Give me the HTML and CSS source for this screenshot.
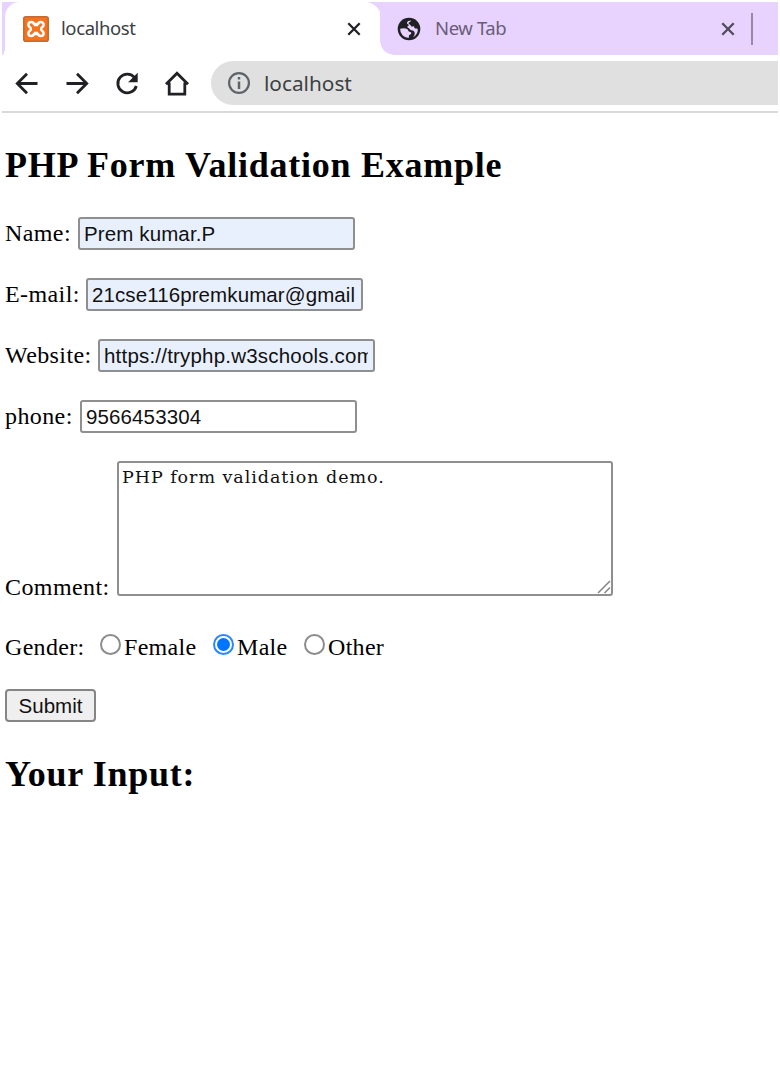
FILE: index.html
```html
<!DOCTYPE html>
<html lang="en">
<head>
<meta charset="utf-8">
<title>localhost</title>
<link rel="stylesheet" href="styles.css">
</head>
<body>
<div class="browser">
  <div class="tabs">
    <div class="edge"></div>
    <div class="tab active">
      <svg class="favicon" viewBox="0 0 26 26" width="26" height="26">
        <rect x=".8" y=".8" width="24.4" height="24.4" rx="2" fill="#f3731f" stroke="#c46a35" stroke-width="1.600"/>
        <path d="M8.300 6C6.500 6 5.400 7.300 5.400 8.800c0 1.600 1 2.200 1.800 2.700.9.700.9 2.300 0 3-.8.500-1.800 1.100-1.800 2.700 0 1.500 1.100 2.800 2.900 2.800 1.600 0 2.400-.9 2.700-2.100h4c.3 1.200 1.100 2.100 2.700 2.100 1.800 0 2.900-1.300 2.900-2.800 0-1.600-1-2.200-1.800-2.700-.9-.7-.9-2.300 0-3 .8-.5 1.800-1.100 1.800-2.700C20.600 7.300 19.500 6 17.700 6c-1.600 0-2.400.9-2.700 2.100h-4C10.700 6.900 9.900 6 8.300 6z" fill="none" stroke="#fff" stroke-width="2.500"/>
        <path d="M13 7.500v2.800M13 15.700v2.800" stroke="#fff" stroke-width="4"/>
      </svg>
      <span class="tab-title">localhost</span>
      <svg class="close" viewBox="0 0 14 14" width="14" height="14"><path d="M1.300 1.300l11.400 11.400M12.700 1.300L1.300 12.700"/></svg>
    </div>
    <div class="tab idle">
      <svg class="globe" viewBox="0 0 24 24" width="24" height="24">
        <circle cx="12" cy="12" r="11.300" fill="#202124"/>
        <path d="M3.100 11.800c2.200-.8 5.200-.9 7 .2 1.300.8.900 2.500 2.300 2.700 1.600.2 2.300.8 1.700 2.100-.5 1.100-1.900.8-2.100 1.800l-.3 2.300A8.800 8.800 0 0 1 3.100 11.800z" fill="#e8d3fe"/>
        <path d="M14.200 3.400c-.2 1.500-2.600 1.400-2.600 2.900 0 1.300 1.700.9 2 2 .3 1.300 1.500 1.500 2.400 1.100.8-.4 1.200.2 1.300 1 .1.900 1.300 1.100 2.900 1.100l.6 1.200c0 3.400-2.200 6.300-4.700 7.400 1.400-1.800 2-3.100 1.400-4.900-.5-1.500-1.700-1.900-3.200-2-1.600-.1-1.500-1.700-2.900-2.100-1.300-.4-1.300-1.900-.1-2.300.8-.3.400-1.300-.3-1.500-1.600-.5-1.100-2.600.3-3.300z" fill="#e8d3fe"/>
      </svg>
      <span class="tab-title">New Tab</span>
      <svg class="close" viewBox="0 0 14 14" width="14" height="14"><path d="M1.300 1.300l11.400 11.400M12.700 1.300L1.300 12.700"/></svg>
      <span class="divider"></span>
    </div>
  </div>
  <div class="toolbar">
    <svg class="nav" viewBox="0 0 26 26" width="26" height="26"><path d="M23.500 13.500H4M13 3.800L3.300 13.500l9.700 9.700"/></svg>
    <svg class="nav" viewBox="0 0 26 26" width="26" height="26"><path d="M2.500 13.500H22M13 3.800l9.700 9.700-9.700 9.700"/></svg>
    <svg class="nav" viewBox="0 0 26 26" width="26" height="26"><path d="M20.700 7.700A9.400 9.400 0 1 0 22.300 16"/><path d="M23.700 2.700v9.600h-9.600z" fill="#202124" stroke="none"/></svg>
    <svg class="nav" viewBox="0 0 26 26" width="26" height="26"><path d="M2 14.200L13 3.200l11 11M5.200 12.500v11.700h15.600V12.500"/></svg>
    <div class="address">
      <svg viewBox="0 0 24 24" width="24" height="24"><circle cx="12" cy="12" r="9.900" fill="none" stroke="#5f6368" stroke-width="2.200"/><path d="M12 6v2.500M12 10.500V18" stroke="#5f6368" stroke-width="2.500"/></svg>
      <span>localhost</span>
    </div>
  </div>
</div>
<main class="page">
  <h2 class="title">PHP Form Validation Example</h2>
  <form class="form">
    <div class="row"><label class="name">Name:</label><input class="field filled" value="Prem kumar.P"></div>
    <div class="row"><label class="email">E-mail:</label><input class="field filled mail" value="21cse116premkumar@gmail.com"></div>
    <div class="row"><label class="website">Website:</label><input class="field filled site" value="https://tryphp.w3schools.com"></div>
    <div class="row"><label class="phone">phone:</label><input class="field" value="9566453304"></div>
    <div class="row tall">
      <label class="comment">Comment:</label>
      <div class="area-box">
        <textarea class="area" spellcheck="false">PHP form validation demo.</textarea>
        <svg class="grip" viewBox="0 0 14 14" width="14" height="14"><path d="M1 13L13 1M7.500 13L13 7.500" stroke="#858585" stroke-width="1.500"/></svg>
      </div>
    </div>
    <div class="row gender">
      <span class="gender-label">Gender:</span>
      <label class="option female"><span class="radio"></span>Female</label>
      <label class="option male"><span class="radio on"></span>Male</label>
      <label class="option"><span class="radio"></span>Other</label>
    </div>
    <button class="submit" type="button">Submit</button>
  </form>
  <h2 class="result">Your Input:</h2>
</main>
</body>
</html>
```
FILE: styles.css
```css
* { box-sizing: border-box; }
body { margin: 0; height: 1077px; overflow: hidden; background: #fff; color: #000; font-family: "Liberation Serif", serif; }
.browser { margin: 2px 2px 0; font-family: "Noto Sans", sans-serif; color: #3c4043; }
.tabs { display: flex; height: 53px; background: linear-gradient(90deg, #e8d3fe 340px, #e8d3fe 100%); }
.edge { width: 3px; height: 53px; background: radial-gradient(ellipse 4px 16px at 0 0, #e8d3fe 98%, transparent) no-repeat 0 37px, linear-gradient(#e8d3fe, #e8d3fe) no-repeat 0 0 / 3px 37px, #fff; }
.tab { display: flex; align-items: center; height: 53px; }
.tab.active { width: 376px; margin-right: -1px; padding-left: 18px; background: #fff; border-radius: 15px 16px 0 0; }
.tab.idle { flex: 1; padding-left: 17px; background: #e8d3fe; border-bottom-left-radius: 14px; color: #6b5d78; box-shadow: -8px 8px 0 -8px #fff; }
.tab-title { font-size: 18.5px; line-height: 26px; position: relative; top: -1px; }
.active .tab-title { margin-left: 12px; width: 287px; letter-spacing: -.4px; }
.idle .tab-title { margin-left: 14px; width: 286px; letter-spacing: -.4px; }
.close { fill: none; stroke: #202124; stroke-width: 2.3; flex: none; }
.active .close { margin-left: -1px; }
.idle .close { stroke: #51485b; }
.favicon, .globe { flex: none; }
.divider { width: 2px; height: 32px; margin-left: 16px; background: #978aa6; }
.toolbar { display: flex; align-items: center; height: 58px; border-bottom: 2px solid #d9d9d9; padding-left: 12px; gap: 24px; }
.tabs, .toolbar { position: relative; }
.tabs::after { content: ""; position: absolute; left: 378px; bottom: 0; width: 14px; height: 14px; background: radial-gradient(circle at 100% 0, transparent 13.5px, #fff 14px); }
.nav { fill: none; stroke: #202124; stroke-width: 2.8; flex: none; }
.address { display: flex; align-items: center; flex: 1; height: 44px; margin-left: -3px; padding-left: 16px; gap: 13px; background: #e0e0e0; border-radius: 22px 0 0 22px; font-size: 20.8px; }
.page { padding: 30px 5px 0; }
h2 { margin: 0; font-size: 36px; line-height: 44px; font-weight: 700; white-space: nowrap; }
.title { letter-spacing: .75px; }
.form { display: flex; flex-direction: column; align-items: flex-start; gap: 28px; margin-top: 30px; }
.row { display: flex; align-items: center; height: 33px; font-size: 24px; line-height: 30px; white-space: nowrap; letter-spacing: .4px; }
.row > label:first-child { position: relative; top: -1px; }
.name { width: 73px; }
.email { width: 81px; }
.website { width: 93px; }
.phone { width: 75px; }
.comment { width: 112px; margin-bottom: -7px; }
.field { width: 277px; height: 33px; margin: 0; padding: 0 4px; border: 2px solid #8f8f8f; border-radius: 3px; background: #fff; color: #111; font: 20.5px "Liberation Sans", sans-serif; letter-spacing: .12px; }
.filled { background: #e8f0fe; }
.mail { padding-right: 6px; letter-spacing: .1px; }
.site { padding-right: 5px; letter-spacing: .2px; }
.row.tall { height: 135px; align-items: flex-end; }
.area-box { position: relative; height: 135px; }
.area { display: block; width: 496px; height: 135px; margin: 0; padding: 2px 3px; border: 2px solid #8f8f8f; border-radius: 3px; resize: none; color: #111; font: 17.5px/24px "DejaVu Serif", serif; letter-spacing: .95px; }
.grip { position: absolute; right: 2px; bottom: 2px; }
.gender { height: 37px; padding-top: 8px; letter-spacing: .3px; }
.gender-label { width: 94px; }
.option { display: flex; align-items: center; gap: 3px; }
.female { width: 113px; }
.male { width: 91px; }
.radio { display: flex; align-items: center; justify-content: center; width: 21px; height: 21px; border: 2px solid #8c8c8c; border-radius: 50%; margin-top: -4px; margin-left: 1px; }
.radio.on { border-color: #2b86ff; }
.radio.on::after { content: ""; width: 13px; height: 13px; border-radius: 50%; background: #0075ff; }
.submit { width: 91px; height: 33px; padding: 0; border: 2px solid #858585; border-radius: 4px; background: #efefef; color: #111; font: 20.5px "Liberation Sans", sans-serif; }
.result { margin-top: 30px; letter-spacing: .7px; }
```
